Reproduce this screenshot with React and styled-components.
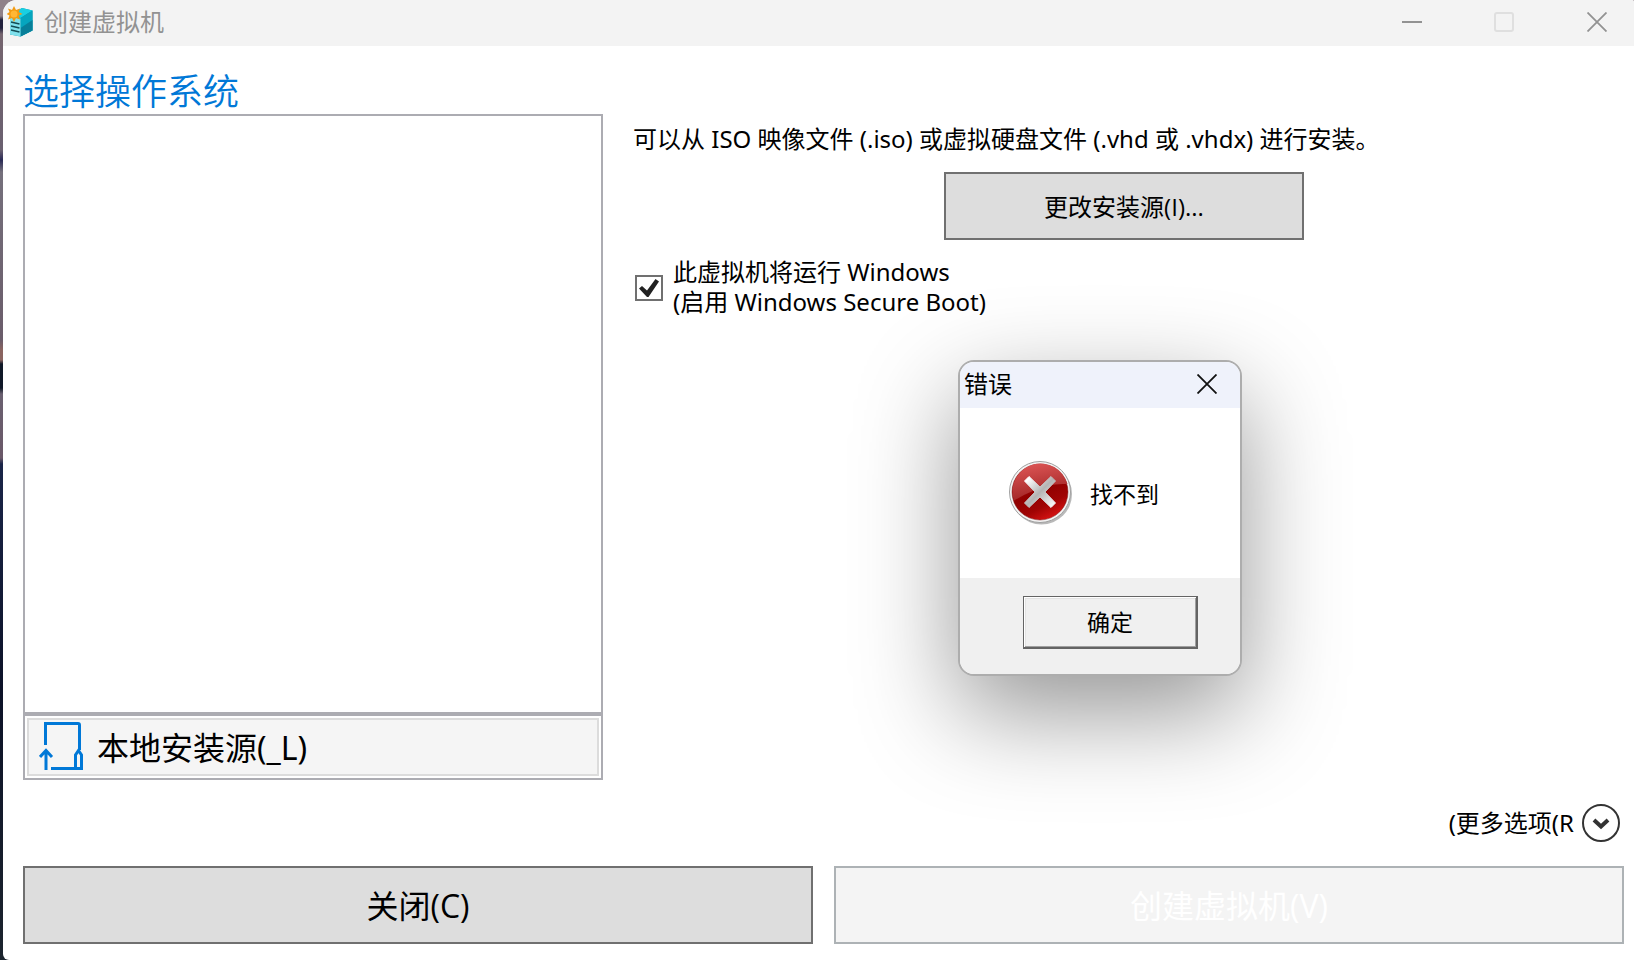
import React, { useState } from 'react';
import styled, { createGlobalStyle, css } from 'styled-components';

const UI_FONT = "'Noto Sans', 'Noto Sans CJK SC', sans-serif";
const BUTTON_FONT = "'Open Sans', 'Noto Sans CJK SC', sans-serif";

const App = () => {
  const [secureBoot, setSecureBoot] = useState(true);

  return (
    <Desktop>
      <GlobalStyle />
      <Window>
        <TitleBar>
          <AppIcon />
          <WindowTitle>创建虚拟机</WindowTitle>
          <CaptionButton type="button" aria-label="最小化">
            <MinimizeIcon />
          </CaptionButton>
          <CaptionButton type="button" aria-label="最大化" disabled>
            <MaximizeIcon />
          </CaptionButton>
          <CaptionButton type="button" aria-label="关闭窗口">
            <CloseIcon color="#929292" />
          </CaptionButton>
        </TitleBar>
        <Content>
          <Heading>选择操作系统</Heading>
          <Columns>
            <SourcePanel>
              <SourceList />
              <SourceFrame>
                <SourceItem type="button">
                  <SourceIcon />
                  本地安装源(_L)
                </SourceItem>
              </SourceFrame>
            </SourcePanel>
            <Options>
              <Description>
                可以从 ISO 映像文件 (.iso) 或虚拟硬盘文件 (.vhd 或 .vhdx) 进行安装。
              </Description>
              <ChangeSourceButton type="button">更改安装源(I)...</ChangeSourceButton>
              <CheckRow>
                <CheckboxCell>
                  <Checkbox
                    type="checkbox"
                    checked={secureBoot}
                    onChange={(e) => setSecureBoot(e.target.checked)}
                  />
                  {secureBoot && <CheckMark />}
                </CheckboxCell>
                <span>
                  此虚拟机将运行 Windows
                  <br />
                  (启用 Windows Secure Boot)
                </span>
              </CheckRow>
            </Options>
          </Columns>
          <MoreOptions type="button">
            <MoreLabel>(更多选项(R</MoreLabel>
            <ExpandIcon />
          </MoreOptions>
          <Actions>
            <ActionButton type="button">关闭(C)</ActionButton>
            <ActionButton type="button" disabled>
              创建虚拟机(V)
            </ActionButton>
          </Actions>
        </Content>
      </Window>
      <Dialog role="alertdialog" aria-labelledby="error-title" aria-describedby="error-text">
        <DialogTitleBar>
          <DialogTitle id="error-title">错误</DialogTitle>
          <DialogClose type="button" aria-label="关闭">
            <CloseIcon color="#111111" />
          </DialogClose>
        </DialogTitleBar>
        <DialogBody>
          <ErrorIcon />
          <p id="error-text">找不到</p>
        </DialogBody>
        <DialogFooter>
          <OkButton type="button">确定</OkButton>
        </DialogFooter>
      </Dialog>
    </Desktop>
  );
};

const AppIcon = () => (
  <svg width="28" height="32" viewBox="0 0 28 32" aria-hidden="true">
    <path d="M3 9L15 2L25.500 4.500V24.500L13.500 30.500L3 28.500Z" fill="#0a93a8" />
    <path d="M3 9L15 2L25.500 4.500L13.500 12Z" fill="#19cfe2" />
    <path d="M13.500 12L25.500 4.500V24.500L13.500 30.500Z" fill="#06a5be" />
    <path d="M13.500 22L25.500 14V24.500L13.500 30.500Z" fill="#087f99" />
    <path d="M3 11L13.500 12.500V30.500L3 28.500Z" fill="#7fe0ec" />
    <path
      d="M4 16L12.500 18M4 20L12.500 22M4 24L12.500 26"
      stroke="#124c55"
      strokeWidth="1.400"
    />
    <path
      d="M7 0L9 4L13 2.500L11.800 6L15.500 8L11.800 9.500L13 13.500L9 12L7 16L5 12L1 13.500L2.500 9.500L-0.500 8L2.500 6L1 2.500L5 4Z"
      fill="#f29a12"
    />
    <circle cx="7" cy="8" r="3.500" fill="#ffb735" />
  </svg>
);

const MinimizeIcon = () => (
  <svg width="20" height="20" aria-hidden="true">
    <path d="M0 10H20" stroke="#929292" strokeWidth="2" />
  </svg>
);

const MaximizeIcon = () => (
  <svg width="20" height="20" aria-hidden="true">
    <rect x="1" y="1" width="18" height="18" rx="2" fill="none" stroke="#dfdfdf" strokeWidth="2" />
  </svg>
);

const CloseIcon = ({ color }) => (
  <svg width="20" height="20" aria-hidden="true">
    <path d="M0.500 0.500L19.500 19.500M19.500 0.500L0.500 19.500" stroke={color} strokeWidth="1.800" />
  </svg>
);

const SourceIcon = () => (
  <svg width="44" height="48" viewBox="0 0 44 48" fill="none" stroke="#0078d7" aria-hidden="true">
    <path d="M6.500 23V1.500H39Q40.500 1.500 40.500 3V28" strokeWidth="3" />
    <path d="M12 46.500H42.500V33L39.500 28.500L36.500 33V46" strokeWidth="3" />
    <path d="M7 48V29M1 35L7 28.500L13 35" strokeWidth="3" />
  </svg>
);

const ExpandIcon = () => (
  <svg width="38" height="38" viewBox="0 0 38 38" fill="none" stroke="#333333" aria-hidden="true">
    <circle cx="19" cy="19" r="18" strokeWidth="2" />
    <path d="M12 16L19 22.500L26 16" strokeWidth="4" />
  </svg>
);

const ErrorIcon = () => (
  <svg width="64" height="64" viewBox="0 0 64 64" aria-hidden="true">
    <defs>
      <linearGradient id="ball" x1="0.200" y1="0" x2="0.700" y2="1">
        <stop offset="0" stopColor="#c01818" />
        <stop offset="0.500" stopColor="#900000" />
        <stop offset="0.750" stopColor="#a00404" />
        <stop offset="1" stopColor="#dc1414" />
      </linearGradient>
      <linearGradient id="gloss" x1="0" y1="0" x2="0.300" y2="1">
        <stop offset="0" stopColor="#e25a5a" />
        <stop offset="1" stopColor="#a02424" />
      </linearGradient>
      <linearGradient id="cross" x1="0" y1="0" x2="1" y2="1">
        <stop offset="0.100" stopColor="#ffffff" />
        <stop offset="0.500" stopColor="#b4b4b4" />
        <stop offset="0.900" stopColor="#f4f4f4" />
      </linearGradient>
    </defs>
    <circle cx="32.500" cy="33" r="30.500" fill="#8a8a8a" opacity="0.600" />
    <circle cx="31" cy="31" r="30.500" fill="#f4f4f4" stroke="#a0a0a0" />
    <circle cx="31" cy="31" r="28" fill="url(#ball)" stroke="#7a2020" strokeWidth="0.500" />
    <path d="M4.500 38A27.500 27.500 0 1 1 58.500 23Q40 22 26 29Q14 34 4.500 40Z" fill="url(#gloss)" />
    <path
      d="M20 15.500L31 26L42 15.500L46.500 20L36 31L46.500 42L42 46.500L31 36L20 46.500L15.500 42L26 31L15.500 20Z"
      fill="url(#cross)"
      stroke="url(#cross)"
      strokeWidth="1"
      strokeLinejoin="round"
    />
  </svg>
);

const GlobalStyle = createGlobalStyle`
  * {
    box-sizing: border-box;
  }
  body {
    margin: 0;
    font-family: ${UI_FONT};
    color: #000000;
  }
  button {
    padding: 0;
    font-family: inherit;
    color: inherit;
  }
  p, h1, h2 {
    margin: 0;
  }
`;

const Desktop = styled.div`
  position: relative;
  min-height: 100vh;
  display: flex;
  padding-left: 3px;
  background: linear-gradient(
    #8f8088 0, #8f8088 16px, #20203c 20px, #20203c 28px,
    #75656f 34px, #6a6070 150px, #2a2a55 160px, #75707c 172px,
    #6a5c6a 340px, #8a6460 350px, #8a6460 360px, #101828 364px,
    #101828 388px, #6a6070 394px, #6a5868 458px, #1a2548 464px,
    #0c1228 690px, #1c242e 960px
  );
`;
const Window = styled.main`
  flex: 1;
  display: flex;
  flex-direction: column;
  min-width: 0;
  background-color: #ffffff;
  border-radius: 14px 2px 0 6px;
  overflow: hidden;
`;
const TitleBar = styled.header`
  display: flex;
  align-items: center;
  height: 46px;
  padding: 0 0 2px 4px;
  background-color: #f3f3f3;
`;
const WindowTitle = styled.h1`
  flex: 1;
  padding-left: 9px;
  font-size: 24px;
  font-weight: 400;
  line-height: 44px;
  color: #929292;
`;
const CaptionButton = styled.button`
  display: flex;
  align-items: center;
  justify-content: center;
  width: 92px;
  height: 44px;
  border: 0;
  background: none;
  &:last-child {
    width: 74px;
    margin-left: 10px;
  }
`;
const Content = styled.div`
  flex: 1;
  display: flex;
  flex-direction: column;
  padding: 22px 10px 16px 20px;
`;
const Heading = styled.h2`
  height: 46px;
  font-size: 36px;
  font-weight: 350;
  line-height: 48px;
  color: #0078d7;
`;
const Columns = styled.div`
  flex: 1;
  display: grid;
  grid-template-columns: 580px 1fr;
  column-gap: 30px;
`;
const SourcePanel = styled.section`
  display: flex;
  flex-direction: column;
`;
const SourceList = styled.div`
  flex: 1;
  border: 2px solid #acacb2;
`;
const SourceFrame = styled.div`
  padding: 2px;
  border: 2px solid #acacb2;
`;
const SourceItem = styled.button`
  display: flex;
  align-items: center;
  gap: 14px;
  width: 100%;
  height: 58px;
  padding: 0 0 2px 10px;
  border: 2px solid #dcdcdc;
  background-color: #f5f5f5;
  font-size: 32px;
`;
const Options = styled.section`
  display: flex;
  flex-direction: column;
  padding-top: 8px;
  font-size: 24px;
`;
const Description = styled.p`
  line-height: 34px;
`;
const pushButton = css`
  padding-bottom: 2px;
  border: 2px solid #707070;
  background-color: #dddddd;
  font-family: ${BUTTON_FONT};
  font-weight: 400;
`;
const ChangeSourceButton = styled.button`
  ${pushButton}
  width: 360px;
  height: 68px;
  margin: 16px 0 0 311px;
  font-size: 24px;
`;
const CheckRow = styled.label`
  display: flex;
  align-items: center;
  gap: 10px;
  margin: 17px 0 0 2px;
  line-height: 30px;
`;
const CheckboxCell = styled.span`
  position: relative;
  display: flex;
  padding-top: 2px;
`;
const Checkbox = styled.input`
  appearance: none;
  width: 28px;
  height: 26px;
  margin: 0;
  border: 2px solid #707070;
  background: #ffffff;
`;
const CheckMark = styled(({ className }) => (
  <svg className={className} width="20" height="18" viewBox="0 0 20 18" aria-hidden="true">
    <path d="M0 9.500L3 7L8 11.500L16.500 0L20 2.500L9.500 18H8Z" fill="#212121" />
  </svg>
))`
  position: absolute;
  left: 4px;
  bottom: 4px;
  pointer-events: none;
`;
const MoreOptions = styled.button`
  display: flex;
  align-items: center;
  align-self: flex-end;
  gap: 8px;
  margin: 24px 4px 24px 0;
  border: 0;
  background: none;
  font-size: 24px;
`;
const MoreLabel = styled.span`
  padding-bottom: 3px;
`;
const Actions = styled.footer`
  display: grid;
  grid-template-columns: 1fr 1fr;
  gap: 21px;
`;
const ActionButton = styled.button`
  ${pushButton}
  height: 78px;
  font-size: 32px;
  &:disabled {
    border-color: #adb2b5;
    background-color: #f4f4f4;
    color: #ffffff;
  }
`;
const Dialog = styled.div`
  position: absolute;
  top: 360px;
  left: 958px;
  width: 284px;
  border: 2px solid #adadad;
  border-radius: 16px;
  background-color: #ffffff;
  box-shadow: 0 36px 100px rgba(0, 0, 0, 0.42);
  overflow: hidden;
`;
const DialogTitleBar = styled.div`
  display: flex;
  align-items: center;
  justify-content: space-between;
  height: 46px;
  padding: 0 0 2px 4px;
  background-color: #eff2fb;
`;
const DialogTitle = styled.h2`
  font-size: 24px;
  font-weight: 400;
  line-height: 44px;
`;
const DialogClose = styled.button`
  display: flex;
  align-items: center;
  justify-content: center;
  width: 66px;
  height: 44px;
  border: 0;
  background: none;
`;
const DialogBody = styled.div`
  display: flex;
  align-items: center;
  gap: 17px;
  height: 170px;
  padding-left: 49px;
  font-size: 23px;
`;
const DialogFooter = styled.div`
  height: 96px;
  padding: 18px 42px 0 63px;
  background-color: #f0f0f0;
`;
const OkButton = styled.button`
  width: 100%;
  height: 53px;
  padding-bottom: 2px;
  border: 1px solid #646464;
  border-width: 1px 2px 2px 1px;
  background-color: #f0f0f0;
  box-shadow: inset 1px 1px 0 #ffffff, inset -1px -1px 0 #a0a0a0, inset 2px 2px 0 #e3e3e3;
  font-size: 23px;
`;

export default App;
